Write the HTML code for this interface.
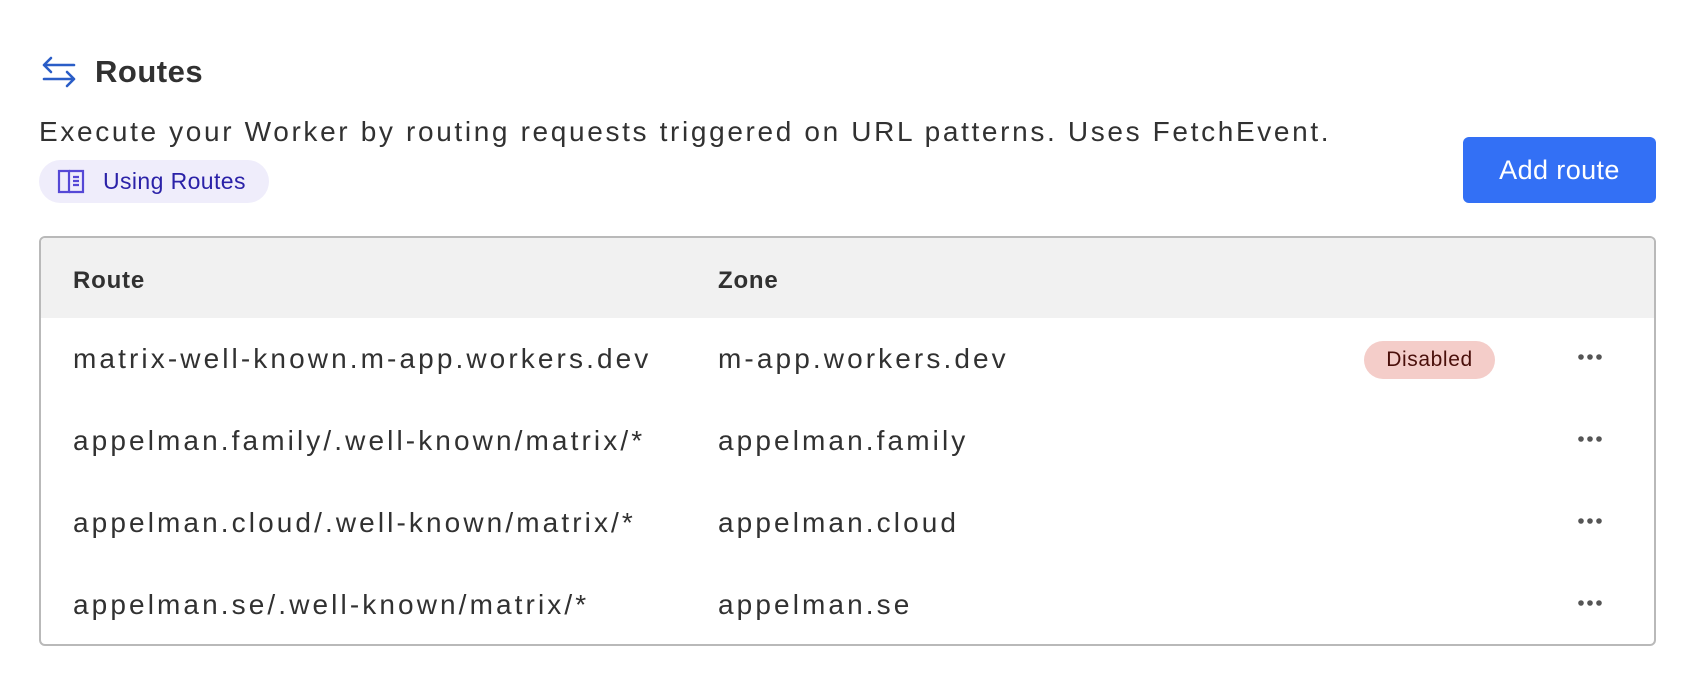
<!DOCTYPE html>
<html><head><style>
*{margin:0;padding:0;box-sizing:border-box}
body{width:1704px;height:690px;background:#fff;font-family:"Liberation Sans",sans-serif;color:#313131;position:relative;overflow:hidden}
.a{position:absolute;white-space:nowrap}
.title{left:95px;top:54px;font-size:31px;font-weight:bold;letter-spacing:0.5px}
.desc{left:39px;top:116px;font-size:28px;letter-spacing:2.65px}
.pill{left:39px;top:160px;width:230px;height:43px;border-radius:22px;background:#efedfb;color:#2b22a8;font-size:23px}
.pill span{position:absolute;left:64px;top:8px;letter-spacing:0.4px}
.btn{left:1463px;top:137px;width:193px;height:66px;border-radius:6px;background:#3370f5;color:#fff;font-size:27px;text-align:center;line-height:66px;letter-spacing:0.4px}
.tbl{left:39px;top:236px;width:1617px;height:410px;border:2px solid #b9b9b9;border-radius:6px;overflow:hidden}
.hdr{position:absolute;left:0;top:0;width:100%;height:80px;background:#f1f1f1}
.th{font-size:24px;font-weight:bold;letter-spacing:0.8px}
.td{font-size:28px;letter-spacing:3.1px}
.dis{left:1323px;top:103px;width:131px;height:38px;border-radius:19px;background:#f4cdc9;color:#4a0f0a;font-size:21px;text-align:center;line-height:38px;letter-spacing:0.6px}
.dots{width:26px;height:8px}
</style></head><body>
<svg class="a" style="left:41px;top:56px" width="36" height="32" viewBox="0 0 36 32" fill="none" stroke="#2a5dc7" stroke-width="2.6" stroke-linecap="round" stroke-linejoin="round"><path d="M3 9H33M3 9L10 2M3 9L10 16"/><path d="M33 23H3M33 23L26 16M33 23L26 30"/></svg>
<div class="a title">Routes</div>
<div class="a desc">Execute your Worker by routing requests triggered on URL patterns. Uses FetchEvent.</div>
<div class="a pill"><svg style="position:absolute;left:18px;top:9px" width="28" height="26" viewBox="0 0 28 26" fill="none" stroke="#5548d6" stroke-width="2.2"><path d="M2 2H12V23H2Z"/><path d="M12 2H26V23H12"/><path d="M16 8H22M16 12H22M16 16H22"/></svg><span>Using Routes</span></div>
<div class="a btn">Add route</div>
<div class="a tbl">
<div class="hdr"></div>
<div class="a th" style="left:32px;top:29px">Route</div>
<div class="a th" style="left:677px;top:29px">Zone</div>
<div class="a td" style="left:32px;top:105px">matrix-well-known.m-app.workers.dev</div>
<div class="a td" style="left:677px;top:105px">m-app.workers.dev</div>
<div class="a dis">Disabled</div>
<svg class="a dots" style="left:1536px;top:115px" viewBox="0 0 26 8"><circle cx="4" cy="4" r="2.8" fill="#555"/><circle cx="13" cy="4" r="2.8" fill="#555"/><circle cx="22" cy="4" r="2.8" fill="#555"/></svg>
<div class="a td" style="left:32px;top:187px">appelman.family/.well-known/matrix/*</div>
<div class="a td" style="left:677px;top:187px">appelman.family</div>
<svg class="a dots" style="left:1536px;top:197px" viewBox="0 0 26 8"><circle cx="4" cy="4" r="2.8" fill="#555"/><circle cx="13" cy="4" r="2.8" fill="#555"/><circle cx="22" cy="4" r="2.8" fill="#555"/></svg>
<div class="a td" style="left:32px;top:269px">appelman.cloud/.well-known/matrix/*</div>
<div class="a td" style="left:677px;top:269px">appelman.cloud</div>
<svg class="a dots" style="left:1536px;top:279px" viewBox="0 0 26 8"><circle cx="4" cy="4" r="2.8" fill="#555"/><circle cx="13" cy="4" r="2.8" fill="#555"/><circle cx="22" cy="4" r="2.8" fill="#555"/></svg>
<div class="a td" style="left:32px;top:351px">appelman.se/.well-known/matrix/*</div>
<div class="a td" style="left:677px;top:351px">appelman.se</div>
<svg class="a dots" style="left:1536px;top:361px" viewBox="0 0 26 8"><circle cx="4" cy="4" r="2.8" fill="#555"/><circle cx="13" cy="4" r="2.8" fill="#555"/><circle cx="22" cy="4" r="2.8" fill="#555"/></svg>
</div>
</body></html>
